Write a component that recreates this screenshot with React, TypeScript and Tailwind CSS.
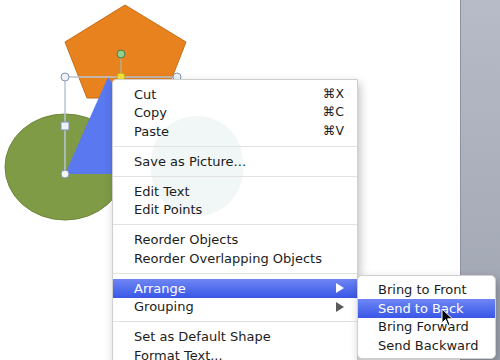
const font = { fontFamily: '"DejaVu Sans", "Liberation Sans", sans-serif' };

type Item =
  | { kind: "item"; label: string; shortcut?: string; sub?: boolean; active?: boolean }
  | { kind: "sep" };

const mainItems: Item[] = [
  { kind: "item", label: "Cut", shortcut: "⌘X" },
  { kind: "item", label: "Copy", shortcut: "⌘C" },
  { kind: "item", label: "Paste", shortcut: "⌘V" },
  { kind: "sep" },
  { kind: "item", label: "Save as Picture..." },
  { kind: "sep" },
  { kind: "item", label: "Edit Text" },
  { kind: "item", label: "Edit Points" },
  { kind: "sep" },
  { kind: "item", label: "Reorder Objects" },
  { kind: "item", label: "Reorder Overlapping Objects" },
  { kind: "sep" },
  { kind: "item", label: "Arrange", sub: true, active: true },
  { kind: "item", label: "Grouping", sub: true },
  { kind: "sep" },
  { kind: "item", label: "Set as Default Shape" },
  { kind: "item", label: "Format Text..." },
];

const subItems = ["Bring to Front", "Send to Back", "Bring Forward", "Send Backward"];

function Arrow({ white }: { white?: boolean }) {
  return (
    <svg width="8" height="10" viewBox="0 0 8 10">
      <path d="M0 0 L8 5 L0 10 Z" fill={white ? "#ffffff" : "#5a5a5a"} />
    </svg>
  );
}

function MenuRow({ item }: { item: Item }) {
  if (item.kind === "sep") {
    return (
      <div className="h-[11.5px] flex items-center">
        <div className="h-px w-full bg-[#e2e2e2]" />
      </div>
    );
  }
  return (
    <div
      className={
        "h-[18.5px] flex items-center justify-between pl-[21px] pr-[13px] text-[13px] " +
        (item.active ? "bg-gradient-to-b from-[#6f86f3] to-[#3a55e6] text-white" : "text-[#1c1c1c]")
      }
    >
      <span>{item.label}</span>
      {item.shortcut && <span className="text-[12.5px]">{item.shortcut}</span>}
      {item.sub && <Arrow white={item.active} />}
    </div>
  );
}

function Canvas() {
  return (
    <svg width="460" height="360" className="block">
      <polygon points="125,5 186,42 164,98 87,98 65,42" fill="#e8821f" stroke="#c76d17" strokeWidth="1" />
      <ellipse cx="65" cy="167" rx="60" ry="53" fill="#7f9b46" stroke="#6d873a" strokeWidth="1" />
      <polygon points="65,174 108,77 177,174" fill="#5a78ef" />
      <line x1="65" y1="77" x2="177" y2="77" stroke="#b9c6d6" strokeWidth="1.5" />
      <line x1="65" y1="77" x2="65" y2="174" stroke="#b9c6d6" strokeWidth="1.5" />
      <line x1="121" y1="54" x2="121" y2="77" stroke="#a8b7a0" strokeWidth="1.2" />
      <circle cx="121" cy="54" r="4" fill="#8fd08a" stroke="#4e7a4a" strokeWidth="1" />
      <circle cx="121" cy="77" r="4" fill="#f3e23a" stroke="#c9b320" strokeWidth="1" />
      <circle cx="65" cy="77" r="4" fill="#eef2f8" stroke="#7f93b3" strokeWidth="1" />
      <circle cx="177" cy="77" r="4" fill="#eef2f8" stroke="#7f93b3" strokeWidth="1" />
      <circle cx="65" cy="174" r="4" fill="#f4f6fa" stroke="#7f93b3" strokeWidth="1" />
      <rect x="61" y="122" width="8" height="8" fill="#eef2f8" stroke="#7f93b3" strokeWidth="1" />
    </svg>
  );
}

export default function App() {
  return (
    <div className="relative w-[500px] h-[360px] overflow-hidden bg-white flex" style={font}>
      <div className="w-[460px] h-full">
        <Canvas />
      </div>
      <div className="w-[40px] h-full border-l border-[#8e939d] bg-gradient-to-b from-[#b7bbc7] to-[#9ea4b0]" />

      <div className="absolute left-[112px] top-[79px] w-[246px] h-[300px] bg-white border border-[#cfcfcf] rounded-tl-[4px] shadow-[2px_4px_10px_rgba(0,0,0,0.25)] pt-[5px] overflow-hidden">
        <div className="absolute left-[38px] top-[36px] w-[92px] h-[100px] rounded-full bg-[#f1f6f6]" />
        <div className="relative">
          {mainItems.map((it, i) => (
            <MenuRow key={i} item={it} />
          ))}
        </div>
      </div>

      <div className="absolute left-[357px] top-[275px] w-[139px] h-[84px] bg-white border border-[#cfcfcf] rounded-[5px] shadow-[2px_4px_10px_rgba(0,0,0,0.25)] pt-[4.5px]">
        {subItems.map((s) => (
          <div
            key={s}
            className={
              "h-[18.5px] flex items-center pl-[20px] text-[13px] " +
              (s === "Send to Back" ? "bg-gradient-to-b from-[#6f86f3] to-[#3a55e6] text-white" : "text-[#1c1c1c]")
            }
          >
            {s}
          </div>
        ))}
      </div>

      <svg className="absolute left-[441px] top-[308px]" width="14" height="20" viewBox="0 0 14 20">
        <path d="M1 1 L1 15 L4.5 11.5 L7 17.5 L9 16.6 L6.6 10.8 L11.5 10.8 Z" fill="#000" stroke="#fff" strokeWidth="1" strokeLinejoin="round" />
      </svg>
    </div>
  );
}
